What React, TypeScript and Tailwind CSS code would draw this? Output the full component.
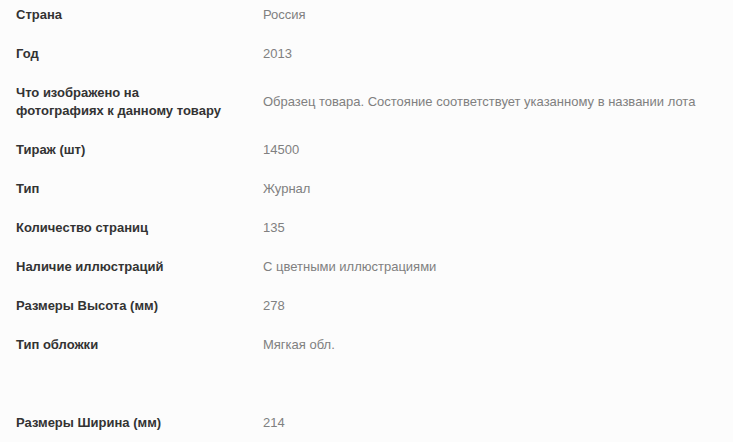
import React from "react";

const rows: { label: string[]; value: string; tall?: boolean; empty?: boolean }[] = [
  { label: ["Страна"], value: "Россия" },
  { label: ["Год"], value: "2013" },
  {
    label: ["Что изображено на", "фотографиях к данному товару"],
    value: "Образец товара. Состояние соответствует указанному в названии лота",
    tall: true,
  },
  { label: ["Тираж (шт)"], value: "14500" },
  { label: ["Тип"], value: "Журнал" },
  { label: ["Количество страниц"], value: "135" },
  { label: ["Наличие иллюстраций"], value: "С цветными иллюстрациями" },
  { label: ["Размеры Высота (мм)"], value: "278" },
  { label: ["Тип обложки"], value: "Мягкая обл." },
  { label: [], value: "", empty: true },
  { label: ["Размеры Ширина (мм)"], value: "214" },
];

export default function App() {
  return (
    <div
      className="w-[733px] h-[442px] overflow-hidden bg-[#fcfcfc]"
      style={{ fontFamily: '"Liberation Sans", Arial, sans-serif' }}
    >
      <div className="-mt-[5px] flex flex-col">
        {rows.map((r, i) => (
          <div
            key={i}
            className={`flex items-center text-[13px] leading-[18px] ${
              r.tall ? "h-[57px]" : "h-[39px]"
            }`}
          >
            <div className="w-[263px] shrink-0 pl-[16px] font-bold text-[#333333]">
              {r.label.map((l, j) => (
                <div key={j}>{l}</div>
              ))}
            </div>
            <div className="text-[#808080]">{r.value}</div>
          </div>
        ))}
      </div>
    </div>
  );
}
